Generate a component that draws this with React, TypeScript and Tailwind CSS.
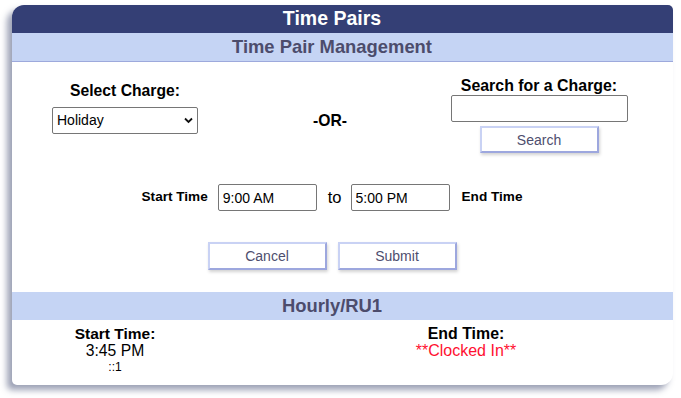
import React from "react";

const btn =
  "h-[27px] w-[119px] bg-white border-2 border-t-[#c9d2f4] border-l-[#c9d2f4] border-r-[#9da7de] border-b-[#9da7de] shadow-[1px_2px_3px_rgba(0,0,0,0.18)] text-[14px] text-[#4e4e6e] leading-none";

export default function App() {
  return (
    <div className="w-[681px] h-[398px] bg-white pt-[5px] pl-[12px] font-['Liberation_Sans',Arial,sans-serif]">
      <div className="w-[661px] h-[380px] bg-white rounded-tl-[12px] rounded-tr-[5px] rounded-br-[12px] rounded-bl-[5px] shadow-[-5px_5px_6px_rgba(60,70,110,0.5)] overflow-hidden flex flex-col">
        <div className="h-[28px] bg-[#343f75] flex items-center justify-center pr-[21px] text-white font-bold text-[19.5px]">
          Time Pairs
        </div>
        <div className="h-[29px] bg-[#c5d4f4] border-b border-[#9da9dc] flex items-center justify-center pr-[21px] text-[#4c4c6c] font-bold text-[18.4px]">
          Time Pair Management
        </div>

        <div className="flex items-start">
          <div className="w-[226px] flex flex-col items-center pt-[20px]">
            <div className="text-[15.7px] font-bold leading-[18px] text-black">Select Charge:</div>
            <div className="relative mt-[7px]">
              <select className="appearance-none w-[146px] h-[27px] border border-[#767676] rounded-[2px] pl-[4px] text-[14px] text-black bg-white outline-none">
                <option>Holiday</option>
              </select>
              <svg className="absolute right-[5px] top-[10px] pointer-events-none" width="9" height="7" viewBox="0 0 9 7">
                <path d="M1 1.5 L4.5 5 L8 1.5" fill="none" stroke="#111" strokeWidth="1.8" />
              </svg>
            </div>
          </div>
          <div className="w-[184px] flex justify-center pt-[50px]">
            <div className="text-[15.7px] font-bold leading-[18px] text-black">-OR-</div>
          </div>
          <div className="w-[234px] flex flex-col items-center pt-[15px]">
            <div className="text-[15.9px] font-bold leading-[18px] text-black">Search for a Charge:</div>
            <input className="w-[177px] h-[27px] border border-[#767676] rounded-[2px] bg-white outline-none" />
            <button className={btn + " mt-[4px]"}>Search</button>
          </div>
        </div>

        <div className="flex items-center justify-center pr-[21px] mt-[31px]">
          <span className="text-[13.6px] font-bold text-black">Start Time</span>
          <input
            className="ml-[10px] w-[99px] h-[27px] border border-[#767676] rounded-[2px] px-[4px] text-[14px] text-black outline-none"
            defaultValue="9:00 AM"
          />
          <span className="ml-[11px] text-[16.5px] text-black">to</span>
          <input
            className="ml-[9px] w-[99px] h-[27px] border border-[#767676] rounded-[2px] px-[4px] text-[14px] text-black outline-none"
            defaultValue="5:00 PM"
          />
          <span className="ml-[12px] text-[13.6px] font-bold text-black">End Time</span>
        </div>

        <div className="flex items-center justify-center pr-[21px] mt-[31px] gap-[11px]">
          <button className={btn + " h-[28px]"}>Cancel</button>
          <button className={btn + " h-[28px]"}>Submit</button>
        </div>

        <div className="mt-[22px] h-[28px] bg-[#c5d4f4] flex items-center justify-center pr-[21px] text-[#4c4c6c] font-bold text-[18.4px]">
          Hourly/RU1
        </div>

        <div className="flex items-start pt-[5px]">
          <div className="w-[206px] flex flex-col items-center">
            <div className="text-[15.5px] font-bold leading-[17px] text-black">Start Time:</div>
            <div className="text-[15.7px] leading-[17px] text-black">3:45 PM</div>
            <div className="text-[12px] leading-[16px] text-black">::1</div>
          </div>
          <div className="ml-[148px] w-[200px] flex flex-col items-center">
            <div className="text-[15.9px] font-bold leading-[17px] text-black">End Time:</div>
            <div className="text-[16px] leading-[17px] text-[#ff1030]">**Clocked In**</div>
          </div>
        </div>
      </div>
    </div>
  );
}
